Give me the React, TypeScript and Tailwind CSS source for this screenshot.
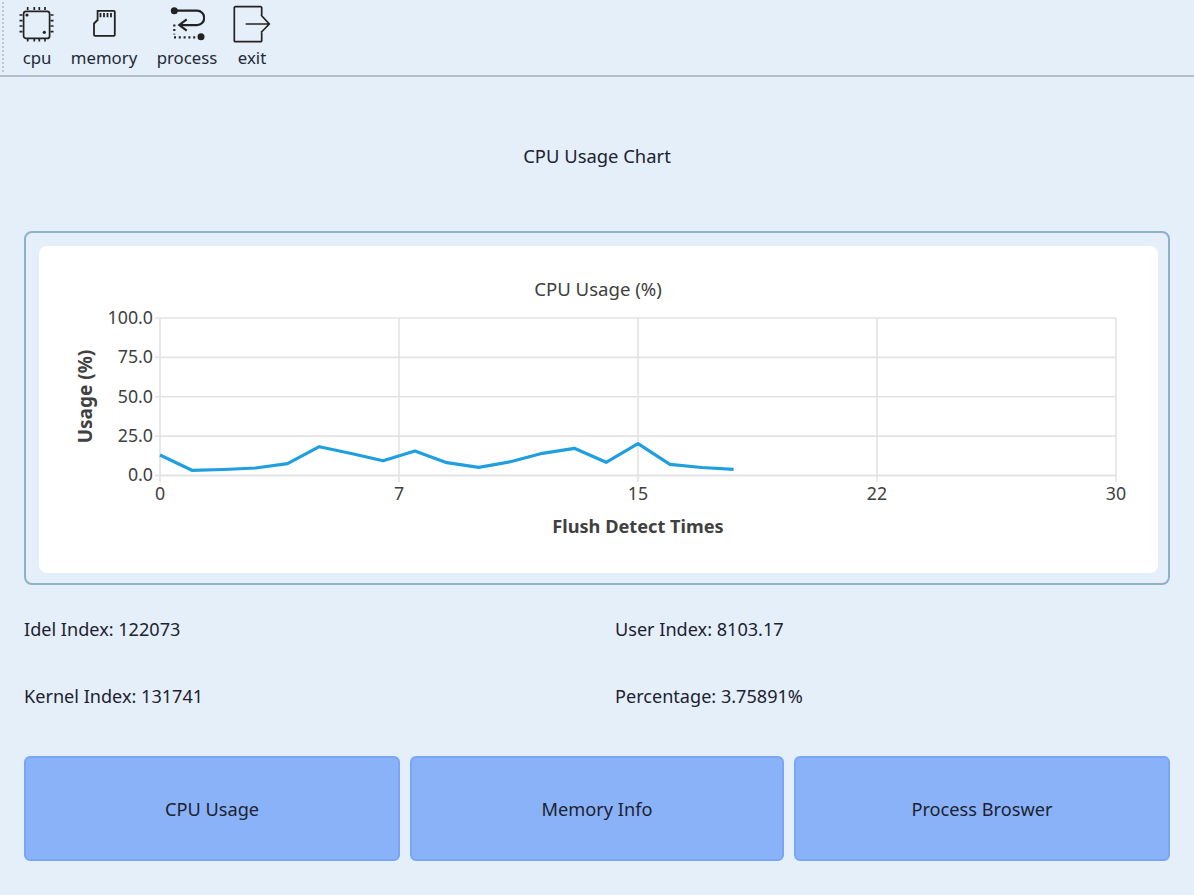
const F = "[font-family:'Noto_Sans',sans-serif]";

const pts: [number, number][] = [
  [0, 455], [1, 470.3], [2, 469.5], [3, 468], [4, 463.7], [5, 446.7], [6, 453.5], [7, 460.7], [8, 451],
  [9, 462.7], [10, 467.3], [11, 461.7], [12, 453.3], [13, 448.3], [14, 462.3], [15, 443.7], [16, 464.3], [17, 467.5], [18, 469.3],
];
const line = pts.map(([i, y]) => `${(160 + (i * 956) / 30).toFixed(1)},${y}`).join(" ");

function Chart() {
  const ys = [318, 357.4, 396.8, 436.1, 475.5];
  const yl = ["100.0", "75.0", "50.0", "25.0", "0.0"];
  const xs = [160, 399, 638, 877, 1116];
  const xl = ["0", "7", "15", "22", "30"];
  return (
    <svg viewBox="39 246 1119 327" className="block w-full h-full" style={{ fontFamily: "'Noto Sans',sans-serif" }}>
      {ys.map((y) => <line key={y} x1={155} x2={1116} y1={y} y2={y} stroke="#e3e3e3" strokeWidth={y === 475.5 ? 2 : 1.6} />)}
      {xs.map((x) => <line key={x} x1={x} x2={x} y1={318} y2={482} stroke="#e3e3e3" strokeWidth={1.6} />)}
      <polyline points={line} fill="none" stroke="#209fdf" strokeWidth={3.2} strokeLinejoin="round" />
      <text x={598} y={296} textAnchor="middle" fontSize={18.6} fill="#404040">CPU Usage (%)</text>
      {ys.map((y, i) => <text key={y} x={153} y={y + 5.8} textAnchor="end" fontSize={17.8} fill="#404040">{yl[i]}</text>)}
      {xs.map((x, i) => <text key={x} x={x} y={500} textAnchor="middle" fontSize={17.8} fill="#404040">{xl[i]}</text>)}
      <text x={638} y={533} textAnchor="middle" fontSize={18.2} fontWeight={700} fill="#404040">Flush Detect Times</text>
      <text transform="translate(92,396.5) rotate(-90)" textAnchor="middle" fontSize={19} fontWeight={700} fill="#404040">Usage (%)</text>
    </svg>
  );
}

function CpuIcon() {
  const xs = [8.7, 15.3, 20.3, 26];
  const ys = [11, 16.7, 22, 27.7];
  return (
    <svg width="36" height="40" viewBox="0 0 36 40" fill="none" stroke="#222" strokeWidth="1.7">
      <rect x="4.6" y="7.4" width="26" height="27" rx="2.5" />
      {xs.map((v) => <path key={v} d={`M${v} 3v3M${v} 35v2.6`} />)}
      {ys.map((v) => <path key={v} d={`M0.5 ${v}h3M31.5 ${v}h3`} />)}
      <circle cx="8" cy="11" r="1.6" fill="#222" stroke="none" />
      <circle cx="25.3" cy="28.3" r="1.6" fill="#222" stroke="none" />
    </svg>
  );
}
function MemIcon() {
  return (
    <svg width="24" height="30" viewBox="0 0 24 30" fill="none" stroke="#222" strokeWidth="1.8">
      <path d="M5.6 1.8H21.8a1 1 0 0 1 1 1V25.8a1 1 0 0 1-1 1H3a1 1 0 0 1-1-1V14.5l3.6-3.5z" />
      <path d="M8.5 4v4.3M12 4v4.3M15.5 4v4.3M19 4v4.3" strokeWidth="1.8" />
    </svg>
  );
}
function ProcIcon() {
  return (
    <svg width="36" height="40" viewBox="0 0 36 40" fill="none" stroke="#222" strokeWidth="2.2">
      <circle cx="5.3" cy="6.7" r="3.5" fill="#222" stroke="none" />
      <path d="M7 6.7H28a7.2 7.2 0 0 1 0 14.4H11" />
      <path d="M17.7 15.3L10.3 21l7.4 5.7" />
      <path d="M5.3 20.5v10" strokeDasharray="2 2.6" />
      <path d="M5 33.3H29" strokeDasharray="2 2.8" />
      <circle cx="32" cy="32.7" r="3.5" fill="#222" stroke="none" />
    </svg>
  );
}
function ExitIcon() {
  return (
    <svg width="38" height="38" viewBox="0 0 38 38" fill="none" stroke="#222" strokeWidth="1.7">
      <path d="M28.7 10V2.7a1 1 0 0 0-1-1H2.3a1 1 0 0 0-1 1V35.7a1 1 0 0 0 1 1H27.7a1 1 0 0 0 1-1V27.5" />
      <path d="M12.7 19H36M28 10l8.3 9-8.3 8.5" />
    </svg>
  );
}

function Tool({ icon, label, className }: { icon: React.ReactNode; label: string; className: string }) {
  return (
    <div className={`flex flex-col items-center ${className}`}>
      <div className="h-[42px] flex items-center justify-center">{icon}</div>
      <div className="mt-[2px] text-[16.8px] leading-[22px] text-[#1f2937] whitespace-nowrap">{label}</div>
    </div>
  );
}

function Btn({ label, className }: { label: string; className: string }) {
  return (
    <div className={`h-[105px] pt-[2px] flex items-center justify-center rounded-md border-2 border-[#78a6f5] bg-[#8ab2f8] text-[18.2px] text-[#1c2230] ${className}`}>
      {label}
    </div>
  );
}

export default function App() {
  return (
    <div className={`h-[895px] w-[1194px] overflow-hidden bg-[#e4effa] text-[#1c2230] ${F}`}>
      <div className="relative h-[77px] border-b-2 border-[#b4bfca] pt-[3px] flex items-start pl-[19px]">
        <div className="absolute left-[2px] top-[2px] h-[70px] border-l-2 border-dotted border-[#c2c8ce]" />
        <Tool icon={<CpuIcon />} label="cpu" className="w-[36px]" />
        <Tool icon={<MemIcon />} label="memory" className="w-[68px] ml-[15px]" />
        <Tool icon={<ProcIcon />} label="process" className="w-[62px] ml-[18px]" />
        <Tool icon={<ExitIcon />} label="exit" className="w-[38px] ml-[15px]" />
      </div>
      <div className="h-[154px] flex items-center justify-center text-[18.4px] text-[#1c2230] pt-[4px]">CPU Usage Chart</div>
      <div className="mx-[24px] h-[354px] rounded-lg border-2 border-[#8fb0c8] p-[13px] pr-[10px] pb-[9px]">
        <div className="h-[327px] rounded-lg bg-white overflow-hidden">
          <Chart />
        </div>
      </div>
      <div className="ml-[24px] mt-[11px] grid grid-cols-[591px_1fr] text-[18.1px] text-[#1c2230]">
        <div className="h-[67px] flex items-center">Idel Index: 122073</div>
        <div className="h-[67px] flex items-center">User Index: 8103.17</div>
        <div className="h-[67px] flex items-center">Kernel Index: 131741</div>
        <div className="h-[67px] flex items-center">Percentage: 3.75891%</div>
      </div>
      <div className="mx-[24px] mt-[26px] flex gap-[10px]">
        <Btn label="CPU Usage" className="w-[376px]" />
        <Btn label="Memory Info" className="w-[374px]" />
        <Btn label="Process Broswer" className="w-[376px]" />
      </div>
    </div>
  );
}
